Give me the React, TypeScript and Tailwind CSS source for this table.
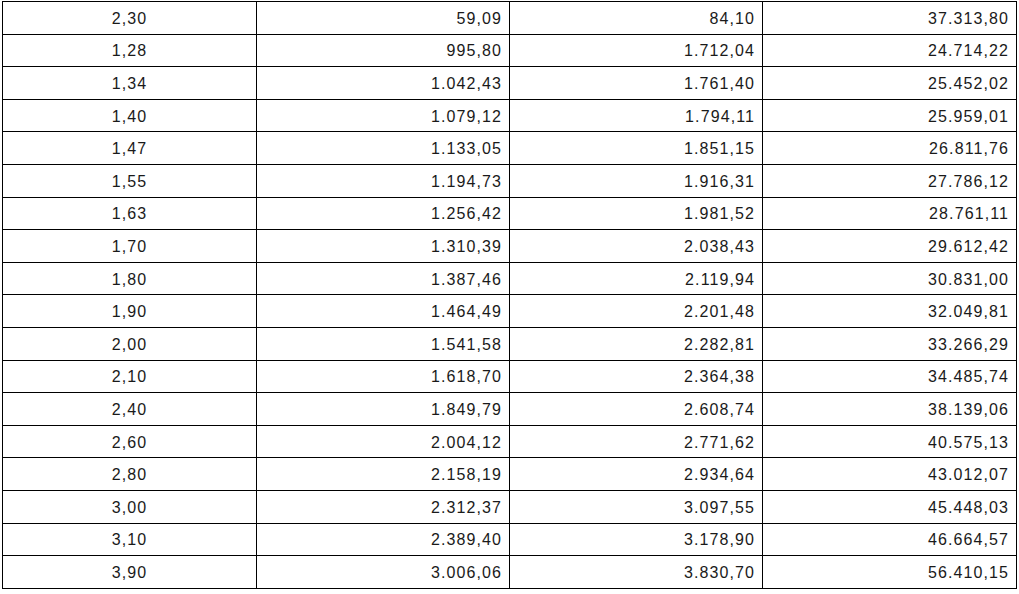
import React from "react";

const rows: string[][] = [
  ["2,30", "59,09", "84,10", "37.313,80"],
  ["1,28", "995,80", "1.712,04", "24.714,22"],
  ["1,34", "1.042,43", "1.761,40", "25.452,02"],
  ["1,40", "1.079,12", "1.794,11", "25.959,01"],
  ["1,47", "1.133,05", "1.851,15", "26.811,76"],
  ["1,55", "1.194,73", "1.916,31", "27.786,12"],
  ["1,63", "1.256,42", "1.981,52", "28.761,11"],
  ["1,70", "1.310,39", "2.038,43", "29.612,42"],
  ["1,80", "1.387,46", "2.119,94", "30.831,00"],
  ["1,90", "1.464,49", "2.201,48", "32.049,81"],
  ["2,00", "1.541,58", "2.282,81", "33.266,29"],
  ["2,10", "1.618,70", "2.364,38", "34.485,74"],
  ["2,40", "1.849,79", "2.608,74", "38.139,06"],
  ["2,60", "2.004,12", "2.771,62", "40.575,13"],
  ["2,80", "2.158,19", "2.934,64", "43.012,07"],
  ["3,00", "2.312,37", "3.097,55", "45.448,03"],
  ["3,10", "2.389,40", "3.178,90", "46.664,57"],
  ["3,90", "3.006,06", "3.830,70", "56.410,15"],
];

export default function App() {
  return (
    <div className="w-[1019px] h-[594px] bg-white overflow-hidden">
      <div
        className="ml-[2px] mt-[1px] w-[1015px] border-l border-t border-black text-[16px] tracking-[1.1px] text-[#1a1a1a]"
        style={{ fontFamily: '"Liberation Sans", Arial, sans-serif' }}
      >
        {rows.map((r, i) => (
          <div key={i} className="grid grid-cols-[254px_253px_253px_254px] h-[32.6px]">
            {r.map((c, j) => (
              <div
                key={j}
                className={
                  "border-r border-b border-black flex items-center pt-[2px] leading-none " +
                  (j === 0 ? "justify-center" : "justify-end pr-[7px]")
                }
              >
                {c}
              </div>
            ))}
          </div>
        ))}
      </div>
    </div>
  );
}
